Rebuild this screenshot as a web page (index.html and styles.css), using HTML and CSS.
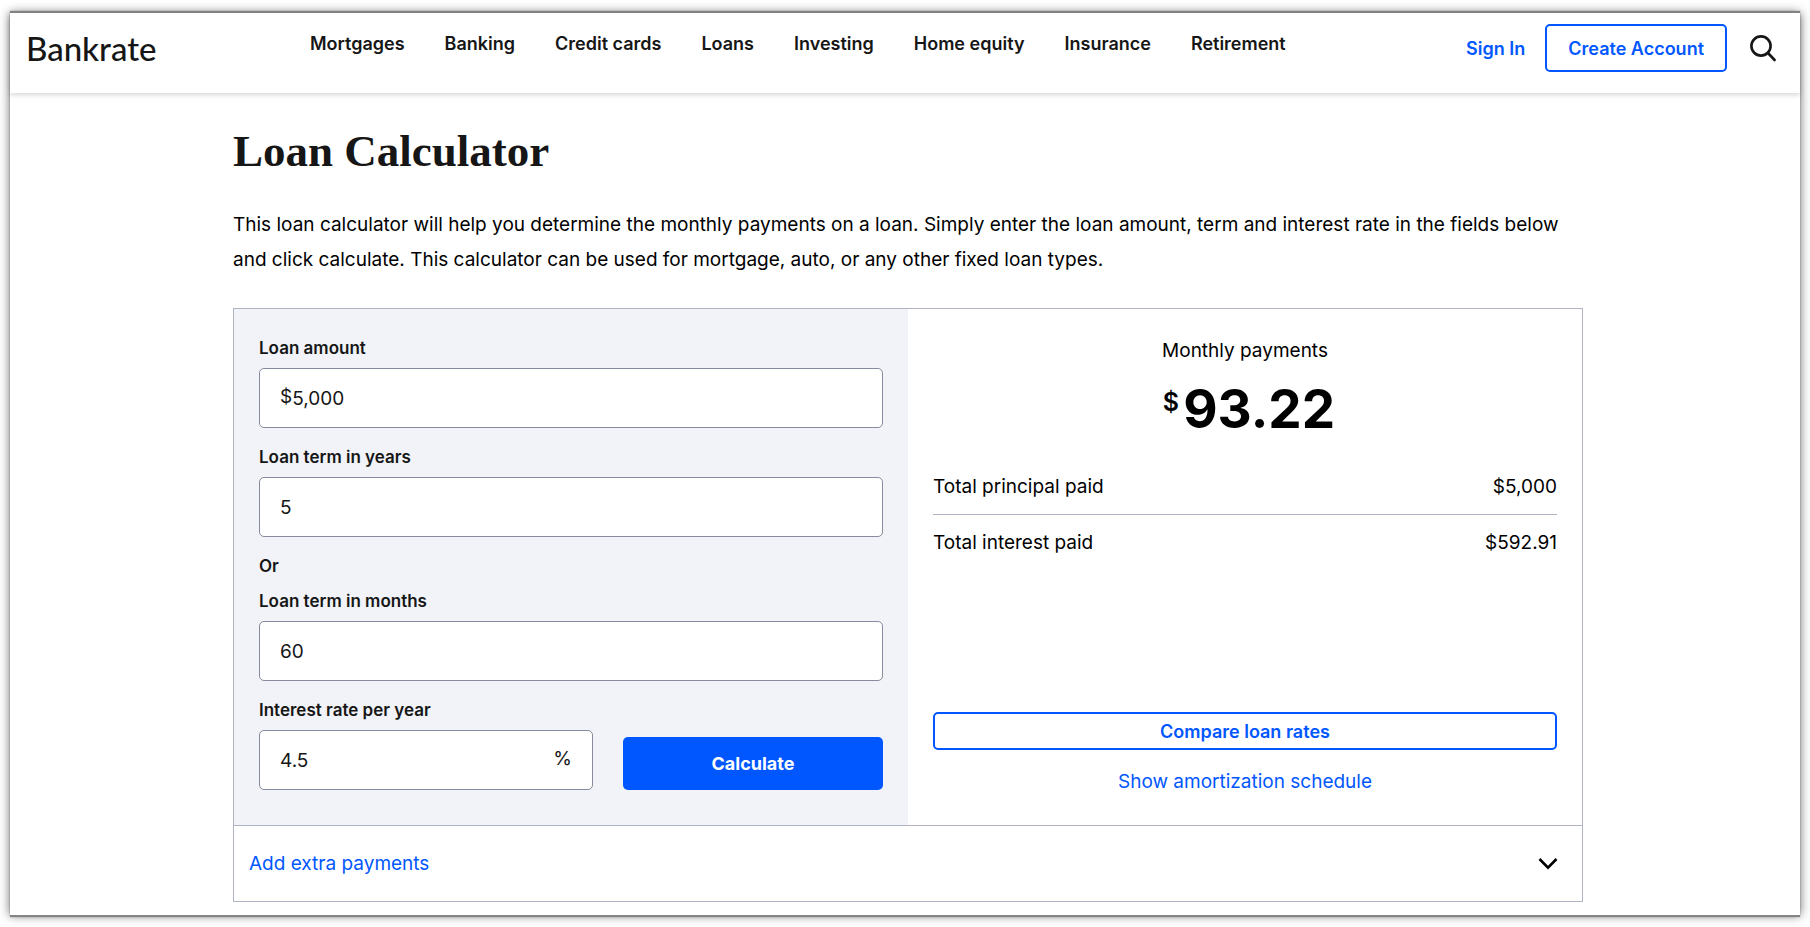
FILE: index.html
```html
<!DOCTYPE html>
<html lang="en">
<head>
<meta charset="utf-8">
<meta name="viewport" content="width=device-width, initial-scale=1">
<title>Loan Calculator | Bankrate</title>
<link rel="stylesheet" href="styles.css">
</head>
<body>
<div class="page">
  <header class="site-header">
    <a class="logo" href="#">Bankrate</a>
    <nav class="main-nav" aria-label="Main">
      <a href="#">Mortgages</a>
      <a href="#">Banking</a>
      <a href="#">Credit cards</a>
      <a href="#">Loans</a>
      <a href="#">Investing</a>
      <a href="#">Home equity</a>
      <a href="#">Insurance</a>
      <a href="#">Retirement</a>
    </nav>
    <div class="account">
      <a class="sign-in" href="#">Sign In</a>
      <button class="outline-button create-account" type="button">Create Account</button>
      <button class="icon-button" type="button" aria-label="Search">
        <svg width="28" height="28" viewBox="0 0 28 28" fill="none" stroke="#161616" stroke-width="2.6" stroke-linecap="round" aria-hidden="true">
          <circle cx="12" cy="12" r="9.6"/>
          <path d="M19 19 25.6 26"/>
        </svg>
      </button>
    </div>
  </header>

  <main class="content">
    <h1 class="title">Loan Calculator</h1>
    <p class="intro">This loan calculator will help you determine the monthly payments on a loan. Simply enter the loan amount, term and interest rate in the fields below and click calculate. This calculator can be used for mortgage, auto, or any other fixed loan types.</p>

    <section class="calculator">
      <form class="inputs">
        <div class="field">
          <label for="amount">Loan amount</label>
          <div class="control">
            <span class="affix">$</span>
            <input id="amount" type="text" value="5,000">
          </div>
        </div>
        <div class="field">
          <label for="years">Loan term in years</label>
          <div class="control"><input id="years" type="text" value="5"></div>
        </div>
        <p class="or">Or</p>
        <div class="field">
          <label for="months">Loan term in months</label>
          <div class="control"><input id="months" type="text" value="60"></div>
        </div>
        <div class="rate-row">
          <div class="field">
            <label for="rate">Interest rate per year</label>
            <div class="control">
              <input id="rate" type="text" value="4.5">
              <span class="affix">%</span>
            </div>
          </div>
          <button class="calculate" type="button">Calculate</button>
        </div>
      </form>

      <div class="results">
        <h2 class="results-title">Monthly payments</h2>
        <p class="payment"><span class="currency">$</span>93.22</p>
        <dl class="totals">
          <div class="total"><dt>Total principal paid</dt><dd>$5,000</dd></div>
          <div class="total"><dt>Total interest paid</dt><dd>$592.91</dd></div>
        </dl>
        <button class="outline-button compare" type="button">Compare loan rates</button>
        <a class="schedule" href="#">Show amortization schedule</a>
      </div>

      <button class="extra" type="button">
        <span>Add extra payments</span>
        <svg width="20" height="14" viewBox="0 0 20 14" fill="none" stroke="#000" stroke-width="2.6" aria-hidden="true"><path d="m1.5 2 8.5 8.7L18.5 2"/></svg>
      </button>
    </section>
  </main>
</div>
</body>
</html>
```
FILE: styles.css
```css
* { box-sizing: border-box; }

body {
  margin: 0;
  padding: 13px 10px 12px;
  background: #fff;
  color: #000;
  font: 19px/35px Inter, "Liberation Sans", sans-serif;
}

a { color: #0157ff; text-decoration: none; }
h1, h2, p, dl, dd { margin: 0; }
button { font: inherit; cursor: pointer; }

.page {
  min-height: calc(100vh - 25px);
  padding-bottom: 13px;
  background: #fff;
  box-shadow: 0 -2px 1px #858585, 0 2px 1px #858585, 0 0 10px rgba(0, 0, 0, .6);
}

.site-header {
  display: flex;
  height: 80px;
  padding: 0 23px 0 16px;
  box-shadow: 0 2px 5px rgba(0, 0, 0, .16);
}

.logo {
  width: 284px;
  padding-top: 17px;
  color: #161616;
  font: 500 33px/36px Lato, sans-serif;
}

.main-nav { display: flex; gap: 40px; padding-top: 13px; }
.main-nav a { color: #161616; font-size: 18px; font-weight: 600; line-height: 36px; }

.account {
  display: flex;
  align-items: center;
  align-self: flex-start;
  gap: 20px;
  margin-left: auto;
  padding-top: 11px;
}

.sign-in, .outline-button { color: #0157ff; font-size: 18px; font-weight: 600; }

.outline-button {
  border: 2px solid #0157ff;
  border-radius: 5px;
  background: #fff;
}

.create-account { height: 48px; padding: 0 21px; }

.icon-button {
  display: flex;
  margin-left: 2px;
  padding: 0;
  border: 0;
  background: none;
}

.content {
  width: 1356px;
  max-width: 100%;
  margin: 0 auto;
  padding: 33px 0 0 6px;
}

.title {
  color: #161616;
  font: bold 45px/50px "Liberation Serif", serif;
}

.intro { margin: 31px 0; }

.calculator {
  display: grid;
  grid-template-columns: 1fr 1fr;
  border: 1px solid #afb3c3;
}

.inputs { padding: 22px 25px 35px; background: #f1f3f8; }

.field label, .or { display: block; color: #161616; font-size: 17px; font-weight: 600; }
.field label { margin-bottom: 2px; }
.field { margin-bottom: 12px; }

.control {
  display: flex;
  align-items: center;
  height: 60px;
  padding: 0 20px;
  border: 1px solid #858a9e;
  border-radius: 5px;
  background: #fff;
}

.control input {
  flex: 1;
  min-width: 0;
  padding: 0;
  border: 0;
  outline: 0;
  background: none;
  color: #161616;
  font: inherit;
}

.affix { padding-bottom: 4px; color: #161616; }

.rate-row {
  display: grid;
  grid-template-columns: 334px 1fr;
  align-items: end;
  gap: 30px;
}

.rate-row .field { margin-bottom: 0; }

.calculate {
  height: 53px;
  border: 0;
  border-radius: 5px;
  background: #0157ff;
  color: #fff;
  font-size: 18px;
  font-weight: 700;
}

.results { display: flex; flex-direction: column; padding: 24px 25px 26px; text-align: center; }
.results-title { font-size: 19px; font-weight: 400; }

.payment {
  display: flex;
  justify-content: center;
  gap: 4px;
  padding-left: 8px;
  font-size: 53px;
  font-weight: 700;
  line-height: 82px;
}

.currency { font-size: 25px; font-weight: 600; line-height: 68px; }

.totals { margin-top: 9px; }
.total { display: flex; justify-content: space-between; padding: 10px 0; }
.total + .total { border-top: 1px solid #afb3c3; }

.compare { height: 38px; margin-top: auto; line-height: 34px; }
.schedule { margin-top: 14px; }

.extra {
  display: flex;
  align-items: center;
  justify-content: space-between;
  grid-column: 1 / -1;
  height: 76px;
  padding: 0 24px 0 15px;
  border: 0;
  border-top: 1px solid #afb3c3;
  background: #fff;
  color: #0157ff;
}
```
